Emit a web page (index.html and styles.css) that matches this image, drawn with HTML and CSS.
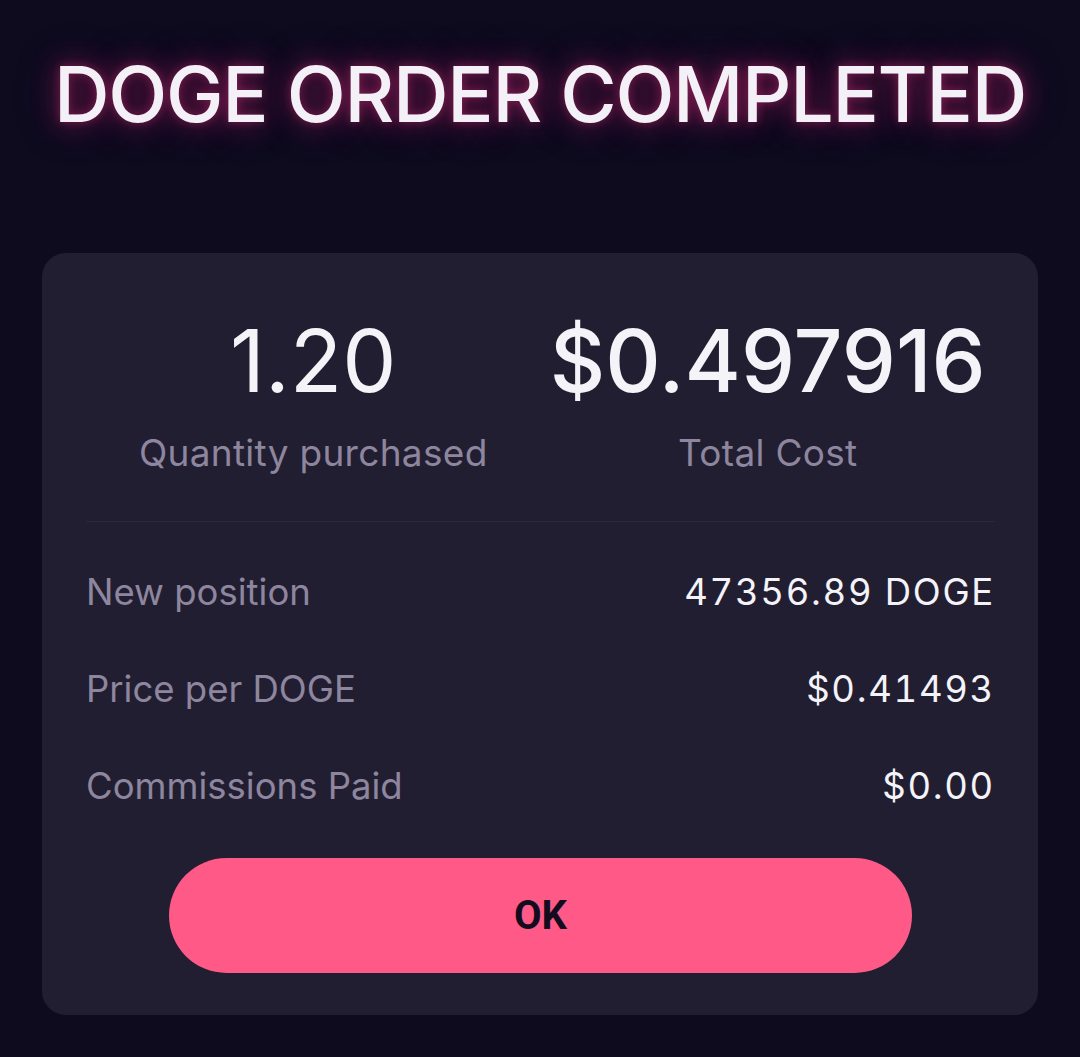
FILE: index.html
```html
<!DOCTYPE html>
<html>
<head>
<meta charset="utf-8">
<link rel="stylesheet" href="styles.css">
</head>
<body>
<div class="page">
  <h1 class="title">DOGE ORDER COMPLETED</h1>
  <div class="card">
    <div class="summary">
      <div class="stat">
        <div class="stat-value">1.20</div>
        <div class="stat-label">Quantity purchased</div>
      </div>
      <div class="stat">
        <div class="stat-value">$0.497916</div>
        <div class="stat-label">Total Cost</div>
      </div>
    </div>
    <div class="divider"></div>
    <div class="rows">
      <div class="row"><span class="row-label">New position</span><span class="row-value">47356.89 DOGE</span></div>
      <div class="row"><span class="row-label">Price per DOGE</span><span class="row-value">$0.41493</span></div>
      <div class="row"><span class="row-label">Commissions Paid</span><span class="row-value">$0.00</span></div>
    </div>
    <div class="actions">
      <button class="ok-btn">OK</button>
    </div>
  </div>
</div>
</body>
</html>
```

FILE: styles.css
```css
html, body {
  margin: 0;
  padding: 0;
  background: #0e0b1f;
  height: 100%;
}
body {
  font-family: Inter, "Noto Sans", sans-serif;
  color: #f2f2f7;
}
.page {
  padding: 54px 42px 0 42px;
  display: flex;
  flex-direction: column;
}
.title {
  margin: 0;
  text-align: center;
  white-space: nowrap;
  font-size: 77px;
  font-weight: 480;
  letter-spacing: -1.3px;
  line-height: 80px;
  color: #f3f1f7;
  text-shadow: 0 0 10px rgba(210, 50, 120, 0.45), 0 0 26px rgba(150, 30, 90, 0.75), 0 0 44px rgba(120, 20, 80, 0.45);
}
.card {
  margin-top: 119px;
  background: #221e32;
  border-radius: 24px;
  padding: 0 43px 42px 44px;
}
.summary {
  display: grid;
  grid-template-columns: 1fr 1fr;
  padding-top: 58px;
  padding-bottom: 46px;
}
.stat {
  display: flex;
  flex-direction: column;
  align-items: center;
}
.stat-value {
  font-size: 86px;
  line-height: 100px;
  font-weight: 400;
  color: #f3f3f8;
}
.stat:nth-child(2) .stat-value {
  font-weight: 500;
}
.stat-label {
  margin-top: 20px;
  font-size: 37px;
  line-height: 44px;
  letter-spacing: 0.3px;
  color: #8d869e;
}
.divider {
  height: 1px;
  background: #2c283c;
}
.rows {
  display: flex;
  flex-direction: column;
  padding-top: 48px;
  gap: 53px;
}
.row {
  display: flex;
  justify-content: space-between;
  align-items: baseline;
  font-size: 36.5px;
  line-height: 44px;
}
.row-label {
  color: #8d869e;
}
.row-value {
  color: #f3f3f8;
  font-variant-numeric: tabular-nums;
  letter-spacing: 1.7px;
}
.actions {
  display: flex;
  justify-content: center;
  padding-top: 50px;
}
.ok-btn {
  width: 743px;
  height: 115px;
  border: none;
  border-radius: 58px;
  background: #ff5a87;
  color: #120c1e;
  font-family: Roboto, "Liberation Sans", sans-serif;
  font-weight: 700;
  font-size: 40px;
  padding: 0;
}
```
